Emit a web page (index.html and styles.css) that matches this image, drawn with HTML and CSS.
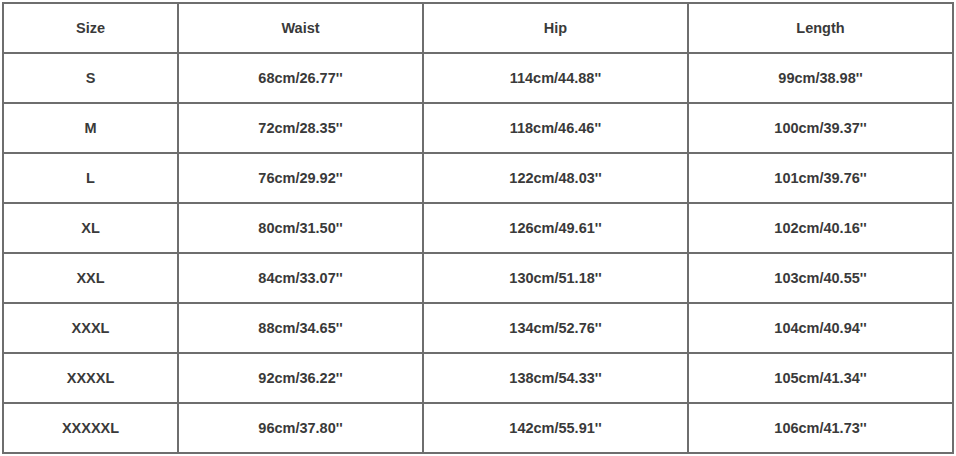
FILE: index.html
```html
<!DOCTYPE html>
<html>
<head>
<meta charset="utf-8">
<link rel="stylesheet" href="styles.css">
</head>
<body>
<table class="size-table">
  <colgroup>
    <col class="c1"><col class="c2"><col class="c3"><col class="c4">
  </colgroup>
  <tr><td>Size</td><td>Waist</td><td>Hip</td><td>Length</td></tr>
  <tr><td>S</td><td>68cm/26.77''</td><td>114cm/44.88''</td><td>99cm/38.98''</td></tr>
  <tr><td>M</td><td>72cm/28.35''</td><td>118cm/46.46''</td><td>100cm/39.37''</td></tr>
  <tr><td>L</td><td>76cm/29.92''</td><td>122cm/48.03''</td><td>101cm/39.76''</td></tr>
  <tr><td>XL</td><td>80cm/31.50''</td><td>126cm/49.61''</td><td>102cm/40.16''</td></tr>
  <tr><td>XXL</td><td>84cm/33.07''</td><td>130cm/51.18''</td><td>103cm/40.55''</td></tr>
  <tr><td>XXXL</td><td>88cm/34.65''</td><td>134cm/52.76''</td><td>104cm/40.94''</td></tr>
  <tr><td>XXXXL</td><td>92cm/36.22''</td><td>138cm/54.33''</td><td>105cm/41.34''</td></tr>
  <tr><td>XXXXXL</td><td>96cm/37.80''</td><td>142cm/55.91''</td><td>106cm/41.73''</td></tr>
</table>
</body>
</html>
```

FILE: styles.css
```css
html, body {
  margin: 0;
  padding: 0;
  background: #fff;
}
body {
  padding: 2px 0 0 2px;
}
.size-table {
  border-collapse: collapse;
  table-layout: fixed;
  width: 950px;
  font-family: "Liberation Sans", Arial, sans-serif;
  font-size: 14.5px;
  font-weight: bold;
  color: #3a3a3a;
}
.c1 { width: 175px; }
.c2 { width: 245px; }
.c3 { width: 265px; }
.c4 { width: 265px; }
.size-table td {
  border: 2px solid #6e6e6e;
  height: 50px;
  padding: 0 0 1px 0;
  box-sizing: border-box;
  text-align: center;
  vertical-align: middle;
}
```
